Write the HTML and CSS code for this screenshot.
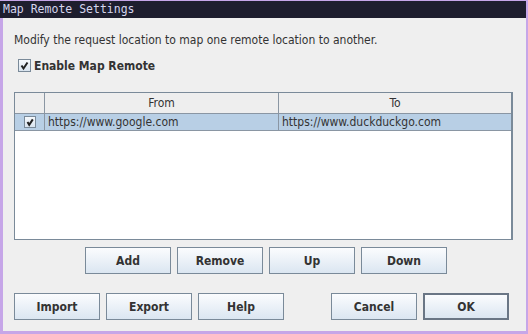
FILE: index.html
```html
<!DOCTYPE html>
<html>
<head>
<meta charset="utf-8">
<link rel="stylesheet" href="styles.css">
</head>
<body>
<div class="window">
  <div class="titlebar">Map Remote Settings</div>
  <div class="content">
    <p class="desc">Modify the request location to map one remote location to another.</p>
    <label class="enable">
      <span class="cb">
        <svg width="13" height="13" viewBox="0 0 13 13"><path d="M3.5 6.5 L5.5 9.5 L9.5 3.5" fill="none" stroke="#222" stroke-width="2"/></svg>
      </span>
      <span class="enable-label">Enable Map Remote</span>
    </label>
    <div class="table">
      <div class="thead">
        <div class="c0"></div>
        <div class="c1">From</div>
        <div class="c2">To</div>
      </div>
      <div class="trow">
        <div class="c0"><span class="cb small"><svg width="12" height="12" viewBox="0 0 12 12"><path d="M3.5 6 L5.2 8.8 L8.8 3.4" fill="none" stroke="#222" stroke-width="2"/></svg></span></div>
        <div class="c1">https://www.google.com</div>
        <div class="c2">https://www.duckduckgo.com</div>
      </div>
    </div>
    <div class="row-buttons">
      <button class="btn">Add</button>
      <button class="btn">Remove</button>
      <button class="btn">Up</button>
      <button class="btn">Down</button>
    </div>
    <div class="bottom-buttons">
      <div class="group">
        <button class="btn">Import</button>
        <button class="btn">Export</button>
        <button class="btn">Help</button>
      </div>
      <div class="group">
        <button class="btn">Cancel</button>
        <button class="btn default">OK</button>
      </div>
    </div>
  </div>
</div>
</body>
</html>
```
FILE: styles.css
```css
* { box-sizing: border-box; }
html, body { margin: 0; padding: 0; }
body { width: 528px; height: 334px; overflow: hidden; background: #efefef; font-family: "DejaVu Sans Condensed", "DejaVu Sans", sans-serif; }
.window {
  width: 528px; height: 334px;
  border-style: solid; border-color: #c6a6e8;
  border-width: 1px 2px 3px 3px;
  background: #efefef;
  display: flex; flex-direction: column;
}
.titlebar {
  height: 17px;
  margin-left: -3px;
  padding-left: 3px;
  background: #1e1e2e;
  color: #d6d6ee;
  font-family: "DejaVu Sans Mono", monospace;
  font-size: 11.5px;
  line-height: 17px;
}
.content {
  flex: 1;
  padding: 0 13px 0 11px;
  display: flex; flex-direction: column;
}
.desc {
  margin: 14px 0 0 0;
  font-size: 12px; line-height: 16px;
  color: #333;
}
.enable {
  display: flex; align-items: center;
  margin: 9px 0 0 4px;
  height: 17px;
}
.cb {
  width: 13px; height: 13px;
  border: 1px solid #7a8a99;
  background: linear-gradient(#f6f9fc, #d9e4ef);
  display: inline-flex; align-items: center; justify-content: center;
}
.cb svg { display: block; margin: -1px; }
.cb.small { width: 12px; height: 12px; }
.enable-label { margin-left: 3px; font-weight: bold; font-size: 12px; color: #333; }
.table {
  margin-top: 18px;
  height: 148px;
  border: 1px solid #7a8a99;
  border-right-width: 2px;
  background: #fff;
  font-size: 12px; color: #333;
}
.thead, .trow { display: flex; }
.thead { height: 21px; background: #eeeeee; border-bottom: 1px solid #8a96a3; }
.thead > div { line-height: 20px; text-align: center; }
.trow { height: 17px; background: #b8cfe5; border-bottom: 1px solid #8a96a3; }
.trow > div { line-height: 16px; padding-left: 3px; }
.c0 { width: 30px; border-right: 1px solid #8a96a3; }
.c1 { width: 234px; border-right: 1px solid #8a96a3; }
.c2 { flex: 1; }
.trow .c0 { display: flex; align-items: center; justify-content: center; padding-left: 0; }
.btn {
  width: 86px; height: 27px;
  border: 1px solid #7a8a99;
  background: linear-gradient(#fbfcfe, #dbe6f1);
  font-family: "DejaVu Sans Condensed", "DejaVu Sans", sans-serif;
  font-weight: bold; font-size: 12px; color: #333;
  padding: 0; margin: 0;
}
.btn.default { border: 2px solid #6a7685; }
.row-buttons {
  margin-top: 7px;
  display: flex; justify-content: center; gap: 6px;
  padding-left: 5px;
}
.bottom-buttons {
  margin-top: 19px;
  display: flex; justify-content: space-between;
  padding-right: 4px;
}
.group { display: flex; gap: 6px; }
```
